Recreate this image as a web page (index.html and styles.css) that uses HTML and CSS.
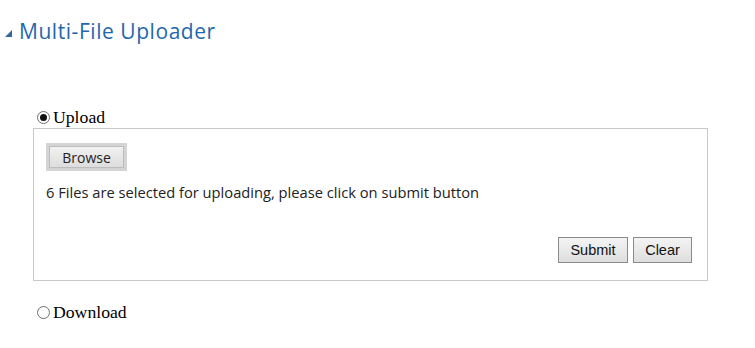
FILE: index.html
```html
<!DOCTYPE html>
<html lang="en">
<head>
    <meta charset="UTF-8">
    <title>Multi-File Uploader</title>
    <link rel="stylesheet" href="styles.css">
</head>
<body>
    <div class="header">
        <span class="arrow"></span>
        <h1 class="title">Multi-File Uploader</h1>
    </div>
    <div class="panel">
        <label class="choice">
            <input type="radio" name="mode" checked>
            <span>Upload</span>
        </label>
        <div class="box">
            <button class="browse">Browse</button>
            <div class="message">6 Files are selected for uploading, please click on submit button</div>
            <div class="actions">
                <button class="btn submit">Submit</button>
                <button class="btn clear">Clear</button>
            </div>
        </div>
        <label class="choice download">
            <input type="radio" name="mode">
            <span>Download</span>
        </label>
    </div>
</body>
</html>
```

FILE: styles.css
```css
body, html {
    margin: 0;
    padding: 0;
    background: #fff;
}
.header {
    display: flex;
    align-items: center;
    padding: 17px 0 0 5px;
    height: 28px;
}
.arrow {
    width: 0;
    height: 0;
    border-left: 7px solid transparent;
    border-bottom: 7px solid #2f6aa6;
    margin: 5px 7px 0 0;
}
.title {
    margin: 0;
    font-family: "Open Sans", sans-serif;
    font-weight: normal;
    font-size: 21px;
    color: #1f67ad;
    letter-spacing: 0.55px;
}
.panel {
    margin: 62px 0 0 33px;
    width: 675px;
}
.choice {
    display: flex;
    align-items: center;
    font-family: "Liberation Serif", serif;
    font-size: 17.7px;
    color: #000;
    height: 20px;
}
.choice input {
    appearance: none;
    -webkit-appearance: none;
    margin: 0 3px 0 4px;
    width: 13px;
    height: 13px;
    border: 1px solid #6e6e6e;
    border-radius: 50%;
    background: #fff;
    box-sizing: border-box;
    position: relative;
}
.choice input:checked::after {
    content: "";
    position: absolute;
    left: 2px;
    top: 2px;
    width: 7px;
    height: 7px;
    border-radius: 50%;
    background: #111;
}
.box {
    margin-top: 1px;
    border: 1px solid #c8c8c8;
    height: 153px;
    padding: 14px 15px 17px 12px;
    box-sizing: border-box;
    display: flex;
    flex-direction: column;
    align-items: flex-start;
}
.browse {
    width: 81px;
    height: 28px;
    font-family: "Open Sans", sans-serif;
    font-size: 14px;
    color: #222;
    background: linear-gradient(#f2f2f2, #dcdcdc);
    border: 3px solid #d4d4d4;
    box-shadow: inset 0 0 0 1px #bdbdbd;
    padding: 0;
}
.message {
    margin-top: 11px;
    font-family: "Open Sans", sans-serif;
    font-size: 14.7px;
    line-height: 20px;
    color: #222;
}
.actions {
    align-self: flex-end;
    display: flex;
    gap: 5px;
    margin-top: auto;
}
.btn {
    height: 26px;
    padding: 0;
    font-family: "Liberation Sans", Arial, sans-serif;
    font-size: 14.5px;
    color: #111;
    background: linear-gradient(#f4f4f4, #dedede);
    border: 1px solid #8a8a8a;
    border-radius: 0;
}
.submit {
    width: 70px;
}
.clear {
    width: 59px;
}
.download {
    margin-top: 21px;
}
```
